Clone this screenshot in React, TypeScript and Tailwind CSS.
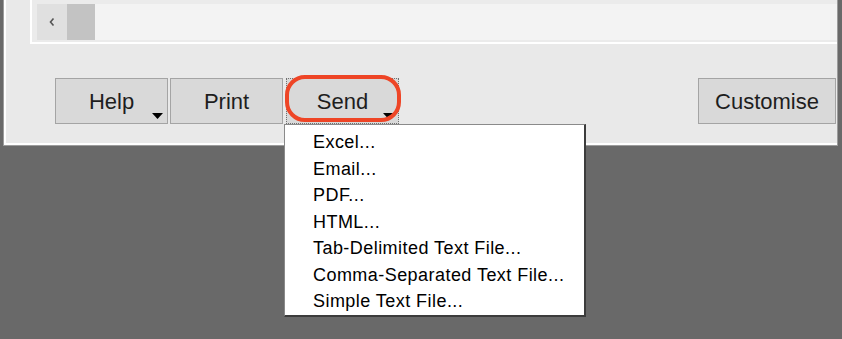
import { ReactNode } from 'react';

const menuItems = [
  'Excel...',
  'Email...',
  'PDF...',
  'HTML...',
  'Tab-Delimited Text File...',
  'Comma-Separated Text File...',
  'Simple Text File...',
];

const Caret = () => (
  <svg width="11" height="6" viewBox="0 0 11 6" className="absolute right-[4px] bottom-[4px]">
    <path d="M0 0h11L5.5 6z" fill="#000" />
  </svg>
);

interface DlgButtonProps {
  children: ReactNode;
  width: string;
  caret?: boolean;
  focused?: boolean;
}

const DlgButton = ({ children, width, caret, focused }: DlgButtonProps) => (
  <div
    className={`relative h-[46px] ${width} flex items-center justify-center bg-[#d9d9d9] text-[22px] text-[#1e1e1e] ${
      focused ? 'border border-dotted border-[#707070]' : 'border border-[#a4a4a4]'
    }`}
  >
    {children}
    {caret && <Caret />}
  </div>
);

const App = () => {
  return (
    <div
      className="relative w-[842px] h-[339px] overflow-hidden bg-[#696969]"
      style={{ fontFamily: '"Liberation Sans", Arial, sans-serif' }}
    >
      <div className="ml-[3px] w-[835px] border-l border-r border-b border-[#9c9c9c]">
        <div className="h-[145px] flex flex-col border-l-2 border-b-2 border-white bg-[#e9e9e9]">
          {/* scroll area */}
          <div className="ml-[24px] h-[44px] border-l-2 border-b-2 border-white bg-[#ebebeb] pl-[5px] pt-[4px]">
            <div className="flex h-[36px]">
              <div className="w-[30px] flex items-center justify-center bg-[#e0e0e0]">
                <svg width="6" height="8" viewBox="0 0 6 8">
                  <path d="M4.5 0.5L1.5 4l3 3.5" stroke="#555" strokeWidth="1.6" fill="none" />
                </svg>
              </div>
              <div className="w-[28px] bg-[#c3c3c3]" />
              <div className="flex-1 bg-[#f3f3f3]" />
            </div>
          </div>

          {/* button row */}
          <div className="mt-[34px] ml-[49px] mr-[1px] flex items-start">
            <DlgButton width="w-[113px]" caret>
              Help
            </DlgButton>
            <div className="ml-[2px]">
              <DlgButton width="w-[113px]">Print</DlgButton>
            </div>
            <div className="ml-[3px]">
              <DlgButton width="w-[113px]" caret focused>
                Send
              </DlgButton>
            </div>
            <div className="flex-1" />
            <DlgButton width="w-[138px]">Customise</DlgButton>
          </div>
        </div>
      </div>

      {/* annotation ring round Send */}
      <div className="absolute left-[285px] top-[75px] w-[116px] h-[47px] rounded-[20px] border-[4px] border-[#ee4526]" />

      {/* send menu */}
      <div className="absolute left-[284px] top-[124px] w-[302px] h-[193px] bg-white border border-[#8a8a8a] border-r-2 border-b-2 border-r-[#3c3c3c] border-b-[#3c3c3c] pt-[4px]">
        {menuItems.map((item) => (
          <div
            key={item}
            className="h-[26.5px] leading-[26.5px] pl-[28px] text-[18px] tracking-[0.45px] text-black whitespace-nowrap"
          >
            {item}
          </div>
        ))}
      </div>
    </div>
  );
};

export default App;
